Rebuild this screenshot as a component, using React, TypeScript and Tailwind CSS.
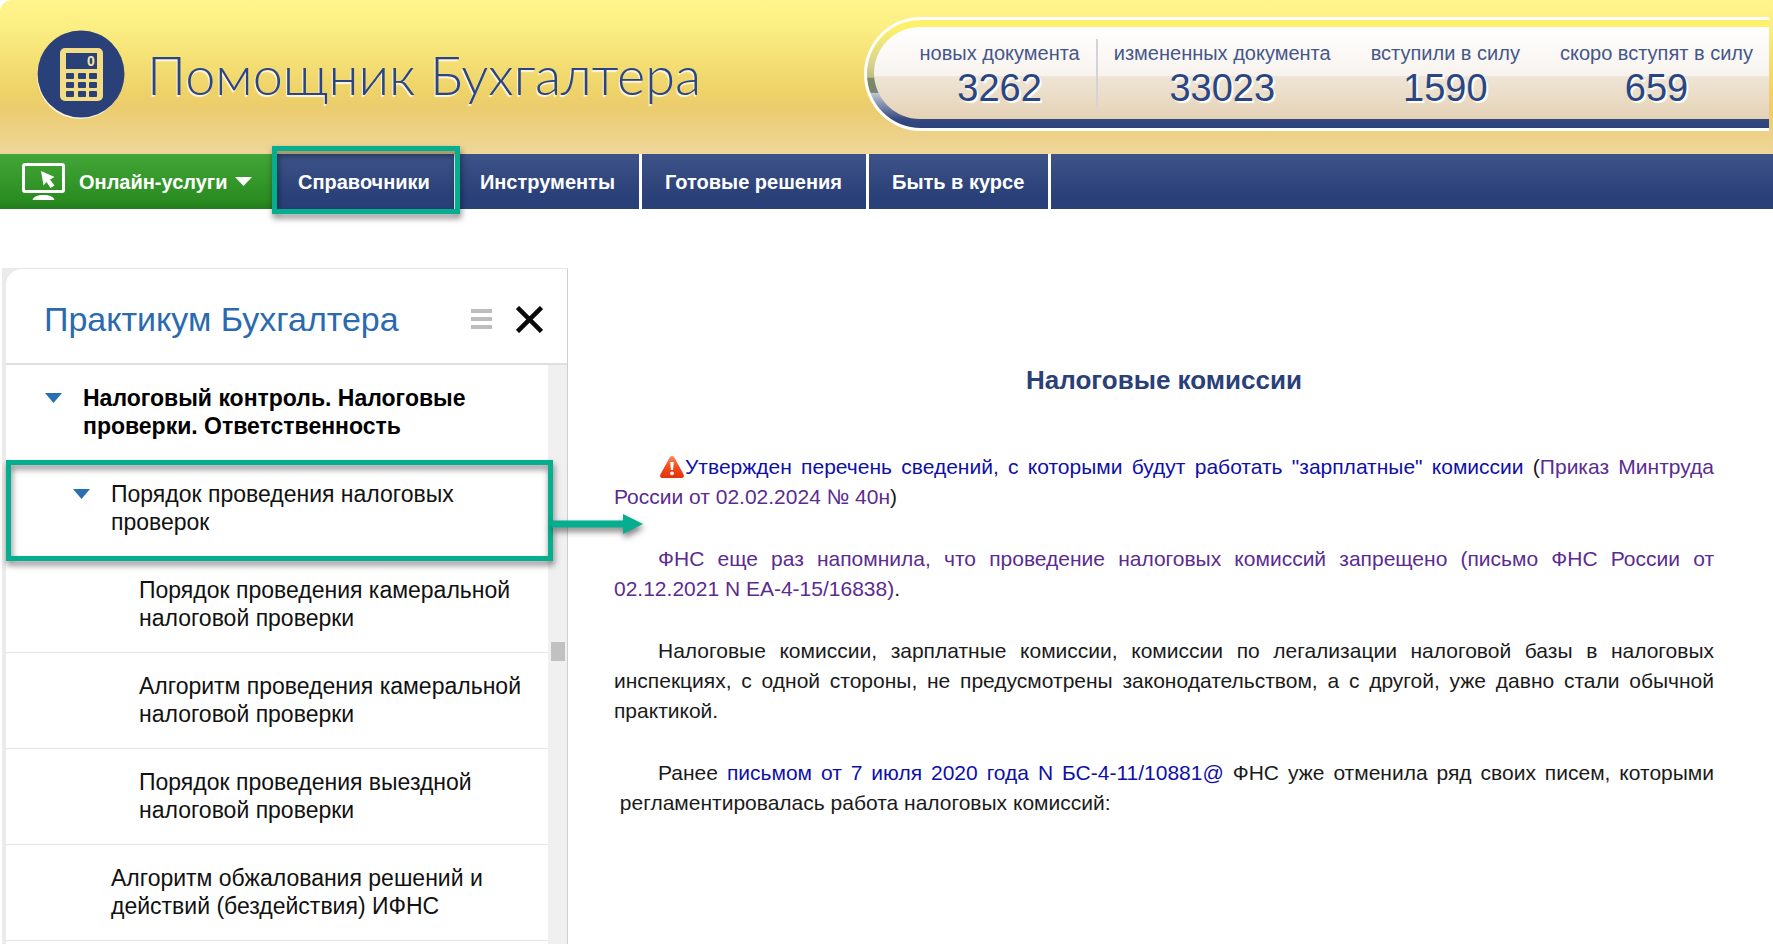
interface Stat {
  label: string;
  value: string;
  className: string;
}

interface TreeItem {
  title: string;
  level: 1 | 2 | 3;
  expanded?: boolean;
  highlighted?: boolean;
}

const stats: Stat[] = [
  { label: 'новых документа', value: '3262', className: 'pr-4 border-r-2 border-[#d3d3dc]' },
  { label: 'измененных документа', value: '33023', className: 'px-4' },
  { label: 'вступили в силу', value: '1590', className: 'pl-6 pr-5' },
  { label: 'скоро вступят в силу', value: '659', className: 'pl-5 pr-4' },
];

const treeItems: TreeItem[] = [
  { title: 'Налоговый контроль. Налоговые проверки. Ответственность', level: 1, expanded: true },
  { title: 'Порядок проведения налоговых проверок', level: 2, expanded: true, highlighted: true },
  { title: 'Порядок проведения камеральной налоговой проверки', level: 3 },
  { title: 'Алгоритм проведения камеральной налоговой проверки', level: 3 },
  { title: 'Порядок проведения выездной налоговой проверки', level: 3 },
  { title: 'Алгоритм обжалования решений и действий (бездействия) ИФНС', level: 2 },
];

const levelStyles = {
  1: 'pl-[39px] font-bold text-black',
  2: 'pl-[67px] text-[#111]',
  3: 'pl-[95px] text-[#111]',
};

function CalculatorLogo() {
  return (
    <svg width="88" height="90" viewBox="0 0 88 90" aria-hidden="true" className="shrink-0">
      <circle cx="43" cy="46" r="43" fill="#fbf3df" />
      <circle cx="44" cy="44" r="43.5" fill="#2a4079" />
      <rect x="23" y="18" width="43" height="53" rx="5" fill="#f2dc84" />
      <rect x="29" y="23" width="31" height="16" fill="#2a4079" />
      <text x="50" y="36" fontSize="14" fontWeight="700" fontFamily="Liberation Sans, sans-serif" fill="#f5e6a8">0</text>
      {[43, 52, 61].map((y) =>
        [29, 41, 52].map((x) => <rect key={`${x}-${y}`} x={x} y={y} width="8" height="6" rx="1" fill="#2a4079" />)
      )}
    </svg>
  );
}

function MonitorIcon() {
  return (
    <svg width="43" height="38" viewBox="0 0 43 38" aria-hidden="true">
      <rect x="1.5" y="1.5" width="40" height="27" rx="1.5" fill="none" stroke="#fff" strokeWidth="3" />
      <path d="M19 8l13.500 6-4.500 2.500 4.500 6-4 2.500-4-6-3 3.500z" fill="#fff" />
      <path d="M10.500 37c1-3.500 5-5 11-5s10 1.500 11 5z" fill="#fff" />
    </svg>
  );
}

function WarningIcon() {
  return (
    <svg width="27" height="26" viewBox="0 0 27 26" role="img" aria-label="Внимание" className="inline-block align-[-6px]">
      <defs>
        <linearGradient id="warning" x1="0" y1="0" x2="0" y2="1">
          <stop offset="0" stopColor="#f58a5c" />
          <stop offset="0.550" stopColor="#ee4a1c" />
          <stop offset="1" stopColor="#e8300c" />
        </linearGradient>
      </defs>
      <path d="M14 2c1.200 0 2 .7 2.600 1.800l9 16.700c1 2-.2 3.500-2 3.500H4.400c-1.800 0-3-1.500-2-3.500l9-16.700C12 2.700 12.800 2 14 2z" fill="url(#warning)" />
      <path d="M12.300 8h3.400l-.6 8h-2.200z" fill="#fff" />
      <circle cx="14" cy="19.300" r="1.900" fill="#fff" />
    </svg>
  );
}

function Header() {
  return (
    <header className="flex h-[154px] items-start justify-between rounded-tl-xl bg-[linear-gradient(to_bottom,#fff38c_0%,#fcf084_15%,#eed268_60%,#ebcc6e_70%,#efd69b_100%)] pr-1 shrink-0">
      <a href="#home" className="flex items-center pl-[37px] pt-[30px]">
        <CalculatorLogo />
        <span className="ml-[22px] whitespace-nowrap font-['Lato','Open_Sans',sans-serif] text-[54px] leading-[88px] font-light text-[#2a4682] [text-shadow:-1px_2px_1px_#fff7e8]">
          Помощник Бухгалтера
        </span>
      </a>
      <div className="mt-[17px] h-[114px] rounded-l-full bg-white py-[3px] pl-[3px]">
        <div className="h-full rounded-l-full bg-[linear-gradient(to_bottom,#fdf06a_0%,#fdf06a_8%,#d8d48f_40%,#c0bd80_53%,#7c8a68_54%,#76866f_67%,#bac5d3_68%,#36497f_92%,#2c437e_100%)] pt-[7px] pb-[9px] pl-[7px]">
          <dl className="flex h-full items-center rounded-l-full bg-[linear-gradient(to_bottom,#ffffff_0%,#f8f3ee_53%,#efe5d6_54%,#e4d2b5_100%)] pl-[46px]">
            {stats.map((stat) => (
              <div key={stat.label} className={`flex h-[68px] flex-col items-center pt-0.5 ${stat.className}`}>
                <dt className="whitespace-nowrap text-[20px] leading-6 text-[#45578a]">{stat.label}</dt>
                <dd className="text-[38px] leading-[46px] text-[#2a4682] [text-shadow:2px_2px_1px_#fff]">{stat.value}</dd>
              </div>
            ))}
          </dl>
        </div>
      </div>
    </header>
  );
}

function NavBar() {
  const linkClass = 'flex items-center whitespace-nowrap border-r-[3px] border-white pl-[23px] pr-6';

  return (
    <nav className="flex h-[55px] shrink-0 bg-[linear-gradient(to_bottom,#3d5388_0%,#2a4078_75%,#2a4078_100%)] text-[20px] font-bold text-white">
      <button type="button" className="flex w-[275px] items-center bg-[linear-gradient(to_bottom,#43a638_0%,#2a8c20_85%,#237c1c_100%)] pl-[22px] whitespace-nowrap">
        <MonitorIcon />
        <span className="ml-3.5">Онлайн-услуги</span>
        <svg width="17" height="9" viewBox="0 0 17 9" aria-hidden="true" className="ml-2">
          <path d="M0 0h17L8.500 9z" fill="#fff" />
        </svg>
      </button>
      <a href="#reference" className={`relative ${linkClass}`}>
        Справочники
        <span className="pointer-events-none absolute -top-2 -right-1.5 -bottom-[5px] -left-[3px] z-10 border-[5px] border-[#04ae8f] drop-shadow-[1px_4px_3px_rgba(0,0,0,0.5)]" />
      </a>
      <a href="#tools" className={linkClass}>Инструменты</a>
      <a href="#solutions" className={linkClass}>Готовые решения</a>
      <a href="#news" className={linkClass}>Быть в курсе</a>
    </nav>
  );
}

function TreeRow({ item }: { item: TreeItem }) {
  return (
    <li className={`relative flex h-24 items-start border-b border-[#e6e6e6] pt-[19px] text-[23px] leading-7 ${levelStyles[item.level]}`}>
      <span className="flex h-7 w-[38px] shrink-0 items-center">
        {item.expanded && (
          <svg width="17" height="10" viewBox="0 0 17 10" aria-hidden="true">
            <path d="M0 0h17L8.500 10z" fill="#2a6fb0" />
          </svg>
        )}
      </span>
      <a href="#topic" className="max-w-[400px]">{item.title}</a>
      {item.highlighted && (
        <>
          <span className="pointer-events-none absolute -top-px right-[-5px] -bottom-[5px] left-0 z-10 border-[5px] border-[#04ae8f] drop-shadow-[1px_4px_3px_rgba(0,0,0,0.5)]" />
          <svg width="92" height="20" viewBox="0 0 92 20" aria-hidden="true" className="pointer-events-none absolute top-[53px] left-full z-10 ml-1 overflow-visible drop-shadow-[1px_4px_3px_rgba(0,0,0,0.5)]">
            <path d="M0 6.500h71V0l20 10-20 10v-6.500H0z" fill="#04ae8f" />
          </svg>
        </>
      )}
    </li>
  );
}

function Sidebar() {
  return (
    <aside className="ml-0.5 flex w-[566px] shrink-0 flex-col bg-[#ebebeb] pl-1">
      <div className="flex grow flex-col rounded-tl-2xl border-t border-r border-t-[#e6e6e6] border-r-[#cfcfcf] bg-white">
        <div className="flex h-24 items-center border-b-2 border-[#dfdfdf] pt-1.5 pl-[38px] pr-6">
          <h2 className="grow whitespace-nowrap text-[34px] text-[#2a6aae]">Практикум Бухгалтера</h2>
          <button type="button" aria-label="Меню">
            <svg width="21" height="20" viewBox="0 0 21 20">
              <path d="M0 2h21M0 10h21M0 18h21" stroke="#bdbdbd" strokeWidth="4" />
            </svg>
          </button>
          <button type="button" aria-label="Закрыть" className="ml-6">
            <svg width="27" height="27" viewBox="0 0 27 27">
              <path d="M1.500 1.500l24 24M25.500 1.500l-24 24" stroke="#0a0a0a" strokeWidth="4.500" />
            </svg>
          </button>
        </div>
        <div className="flex grow">
          <ul className="grow">
            {treeItems.map((item) => (
              <TreeRow key={item.title} item={item} />
            ))}
          </ul>
          <div className="flex w-[19px] shrink-0 flex-col items-center bg-[#f0f0f0] pt-[277px]">
            <div className="h-[19px] w-3.5 bg-[#c1c1c1]" />
          </div>
        </div>
      </div>
    </aside>
  );
}

function Article() {
  return (
    <article className="grow pt-24 pr-[59px] pl-[46px] text-justify text-[21px] leading-[30px] text-[#1a1a1a]">
      <h1 className="mb-14 text-center text-[26px] leading-8 font-bold text-[#2a4079]">Налоговые комиссии</h1>
      <p className="mb-8 indent-11">
        <WarningIcon />
        <a href="#update" className="text-[#0f0fa8]">Утвержден перечень сведений, с которыми будут работать "зарплатные" комиссии</a>{' '}
        (<a href="#order" className="text-[#5b2c8f]">Приказ Минтруда России от 02.02.2024 № 40н</a>)
      </p>
      <p className="mb-8 indent-11">
        <a href="#letter" className="text-[#5b2c8f]">
          ФНС еще раз напомнила, что проведение налоговых комиссий запрещено (письмо ФНС России от 02.12.2021 N ЕА-4-15/16838)
        </a>
        .
      </p>
      <p className="mb-8 indent-11">
        Налоговые комиссии, зарплатные комиссии, комиссии по легализации налоговой базы в налоговых инспекциях, с одной
        стороны, не предусмотрены законодательством, а с другой, уже давно стали обычной практикой.
      </p>
      <p className="indent-11">
        Ранее <a href="#letter-2020" className="text-[#0f0fa8]">письмом от 7 июля 2020 года N БС-4-11/10881@</a> ФНС уже
        отменила ряд своих писем, которыми &nbsp;регламентировалась работа налоговых комиссий:
      </p>
    </article>
  );
}

export default function App() {
  return (
    <div className="flex min-h-screen flex-col bg-white font-['Liberation_Sans',Arial,sans-serif]">
      <Header />
      <NavBar />
      <main className="flex grow pt-[59px]">
        <Sidebar />
        <Article />
      </main>
    </div>
  );
}
